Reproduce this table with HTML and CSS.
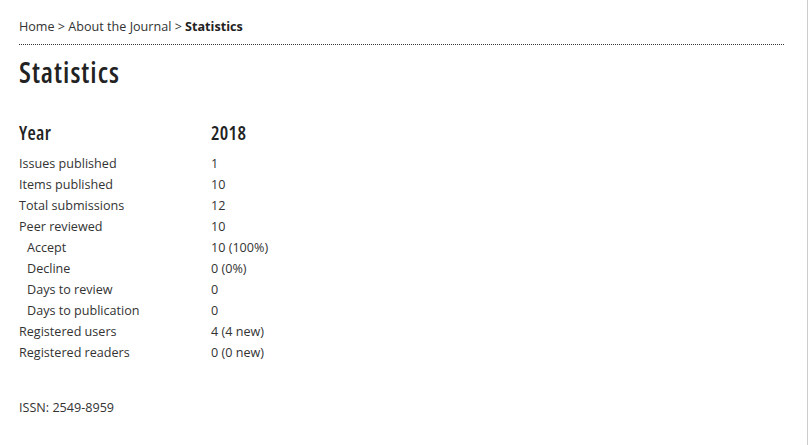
FILE: index.html
```html
<!DOCTYPE html>
<html lang="en">
<head>
<meta charset="utf-8">
<title>Statistics</title>
<link rel="stylesheet" href="styles.css">
</head>
<body>
<div class="page">
  <main class="content">
    <nav class="breadcrumb"><a href="#">Home</a> &gt; <a href="#">About the Journal</a> &gt; <strong>Statistics</strong></nav>
    <h1 class="title">Statistics</h1>
    <table class="stats">
      <thead>
        <tr><th class="label">Year</th><th class="value">2018</th></tr>
      </thead>
      <tbody>
        <tr><td class="label">Issues published</td><td class="value">1</td></tr>
        <tr><td class="label">Items published</td><td class="value">10</td></tr>
        <tr><td class="label">Total submissions</td><td class="value">12</td></tr>
        <tr><td class="label">Peer reviewed</td><td class="value">10</td></tr>
        <tr><td class="label sub">Accept</td><td class="value">10 (100%)</td></tr>
        <tr><td class="label sub">Decline</td><td class="value">0 (0%)</td></tr>
        <tr><td class="label sub">Days to review</td><td class="value">0</td></tr>
        <tr><td class="label sub">Days to publication</td><td class="value">0</td></tr>
        <tr><td class="label">Registered users</td><td class="value">4 (4 new)</td></tr>
        <tr><td class="label">Registered readers</td><td class="value">0 (0 new)</td></tr>
      </tbody>
    </table>
    <p class="issn">ISSN: 2549-8959</p>
  </main>
</div>
</body>
</html>
```
FILE: styles.css
```css
html, body {
  margin: 0;
  padding: 0;
  background: #fff;
}
body {
  font-family: "Open Sans", "Liberation Sans", sans-serif;
  font-size: 12.6px;
  color: #333;
}
.page {
  min-height: 445px;
  border-right: 1px solid #ccc;
  box-sizing: border-box;
}
.content {
  width: 765px;
  padding: 18px 0 0 19px;
}
.breadcrumb {
  padding-bottom: 8px;
  border-bottom: 1px dotted #333;
  line-height: 18px;
}
.breadcrumb a {
  color: #333;
  text-decoration: none;
}
.breadcrumb strong {
  color: #222;
  font-weight: 700;
}
.title {
  margin: 11px 0 33px;
  font-family: "Open Sans", sans-serif;
  font-stretch: 75%;
  font-weight: 600;
  font-size: 28px;
  letter-spacing: 1px;
  line-height: 32px;
  color: #222;
}
.stats {
  border-collapse: collapse;
}
.stats th {
  font-family: "Open Sans", sans-serif;
  font-stretch: 75%;
  font-weight: 600;
  font-size: 19px;
  letter-spacing: 0.3px;
  line-height: 24px;
  color: #222;
  text-align: left;
  padding: 0 0 8px;
}
.stats th, .stats td {
  box-sizing: border-box;
}
.stats td {
  padding: 0;
  line-height: 21px;
}
.label {
  width: 192px;
}
.sub {
  padding-left: 8px !important;
}
.issn {
  margin: 36px 0 0;
  line-height: 18px;
}
```
